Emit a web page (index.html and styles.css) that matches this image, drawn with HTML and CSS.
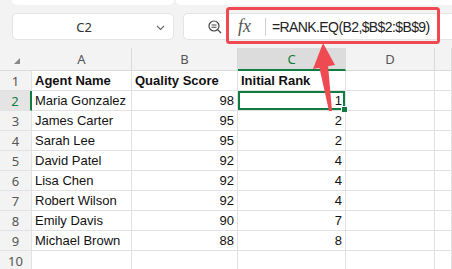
FILE: index.html
```html
<!DOCTYPE html>
<html lang="en">
<head>
<meta charset="UTF-8" />
<title>Rank formula</title>
<link rel="stylesheet" href="styles.css">
</head>
<body>

<div class="app">
  <div class="ribbon-edge">
    <div class="edge edge-left"></div>
    <div class="edge edge-right"></div>
  </div>

  <div class="formula-row">
    <div class="name-box">
      <span class="name">C2</span>
      <svg class="chevron" width="9" height="6" viewBox="0 0 9 6"><path d="M1 1l3.5 3.5L8 1" fill="none" stroke="#666" stroke-width="1.1"/></svg>
    </div>
    <div class="formula-bar">
      <svg class="zoom-icon" width="14" height="14" viewBox="0 0 14 14">
        <circle cx="6" cy="6" r="5" fill="none" stroke="#444" stroke-width="1.2"/>
        <path d="M3.5 5h5M3.5 7.2h5" stroke="#444" stroke-width="1.1"/>
        <path d="M9.6 9.6l3.4 3.4" stroke="#444" stroke-width="1.3"/>
      </svg>
      <span class="fx">fx</span>
      <span class="sep"></span>
      <span class="formula">=RANK.EQ(B2,$B$2:$B$9)</span>
    </div>
  </div>

  <div class="sheet">
    <div class="hdr corner"><span class="corner-mark"></span></div>
    <div class="hdr">A</div>
    <div class="hdr">B</div>
    <div class="hdr active">C</div>
    <div class="hdr">D</div>
    <div class="hdr"></div>

    <div class="rh">1</div>
    <div class="c b">Agent Name</div>
    <div class="c b">Quality Score</div>
    <div class="c b">Initial Rank</div>
    <div class="c"></div><div class="c"></div>

    <div class="rh active">2</div>
    <div class="c">Maria Gonzalez</div>
    <div class="c num">98</div>
    <div class="c num sel">1</div>
    <div class="c"></div><div class="c"></div>

    <div class="rh">3</div>
    <div class="c">James Carter</div>
    <div class="c num">95</div>
    <div class="c num">2</div>
    <div class="c"></div><div class="c"></div>

    <div class="rh">4</div>
    <div class="c">Sarah Lee</div>
    <div class="c num">95</div>
    <div class="c num">2</div>
    <div class="c"></div><div class="c"></div>

    <div class="rh">5</div>
    <div class="c">David Patel</div>
    <div class="c num">92</div>
    <div class="c num">4</div>
    <div class="c"></div><div class="c"></div>

    <div class="rh">6</div>
    <div class="c">Lisa Chen</div>
    <div class="c num">92</div>
    <div class="c num">4</div>
    <div class="c"></div><div class="c"></div>

    <div class="rh">7</div>
    <div class="c">Robert Wilson</div>
    <div class="c num">92</div>
    <div class="c num">4</div>
    <div class="c"></div><div class="c"></div>

    <div class="rh">8</div>
    <div class="c">Emily Davis</div>
    <div class="c num">90</div>
    <div class="c num">7</div>
    <div class="c"></div><div class="c"></div>

    <div class="rh">9</div>
    <div class="c">Michael Brown</div>
    <div class="c num">88</div>
    <div class="c num">8</div>
    <div class="c"></div><div class="c"></div>

    <div class="rh">10</div>
    <div class="c"></div>
    <div class="c"></div>
    <div class="c"></div>
    <div class="c"></div><div class="c"></div>
  </div>

  <!-- callout drawn over the screenshot -->
  <svg class="callout" width="452" height="269" viewBox="0 0 452 269">
    <rect x="227.5" y="8.5" width="211" height="34" rx="2" fill="none" stroke="#ef4a52" stroke-width="3"/>
    <polygon points="323,43 313,69 335,65" fill="#ef4a52"/>
    <polygon points="319,66 328,65 332,111 329,111" fill="#ef4a52"/>
  </svg>
</div>

</body>
</html>
```

FILE: styles.css
```css
body {
  margin: 0;
  background: #f3f3f3;
  font-family: "Liberation Sans", Arial, sans-serif;
}
.app {
  position: relative;
  width: 452px;
  height: 269px;
  overflow: hidden;
}
.ribbon-edge {
  display: flex;
  gap: 2px;
  padding-left: 12px;
  height: 5px;
}
.edge {
  background: #fff;
  border-radius: 0 0 5px 5px;
}
.edge-left {
  width: 162px;
}
.edge-right {
  flex: 1;
  border-radius: 0 0 0 5px;
}
.formula-row {
  display: flex;
  gap: 9px;
  margin-top: 8px;
  padding-left: 12px;
  height: 27px;
}
.name-box {
  width: 162px;
  box-sizing: border-box;
  background: #fff;
  border: 1px solid #e4e4e4;
  border-radius: 5px;
  display: flex;
  align-items: center;
  position: relative;
}
.name {
  flex: 1;
  text-align: center;
  padding-right: 18px;
  font-family: "Noto Sans", sans-serif;
  font-size: 13px;
  color: #333;
}
.chevron {
  position: absolute;
  right: 8px;
  top: 11px;
}
.formula-bar {
  flex: 1;
  background: #fff;
  border: 1px solid #e4e4e4;
  border-right: none;
  border-radius: 5px 0 0 5px;
  display: flex;
  align-items: center;
  padding-left: 24px;
}
.fx {
  margin-left: 16px;
  font-family: "Liberation Serif", serif;
  font-style: italic;
  font-size: 18px;
  color: #555;
  width: 16px;
}
.sep {
  width: 1px;
  height: 18px;
  background: #d0d0d0;
  margin-left: 11px;
}
.formula {
  margin-left: 6px;
  font-size: 14px;
  letter-spacing: -0.6px;
  color: #222;
}
.sheet {
  margin-top: 8px;
  display: grid;
  grid-template-columns: 32px 100px 106px 108px 89px 1fr;
  grid-template-rows: 23px;
  grid-auto-rows: 20px;
  background: #fff;
}
.hdr, .rh {
  background: #f3f3f3;
  font-family: "Noto Sans", sans-serif;
  font-size: 13px;
  color: #555;
  display: flex;
  align-items: center;
  justify-content: center;
  box-sizing: border-box;
}
.hdr {
  border-right: 1px solid #dadada;
  border-bottom: 1px solid #dadada;
}
.hdr.corner {
  border-right: none;
  position: relative;
}
.corner-mark {
  position: absolute;
  left: 14px;
  top: 10px;
  border-left: 6px solid transparent;
  border-bottom: 6px solid #888;
}
.hdr.active {
  background: #dcdcdc;
  color: #107c41;
  border-bottom: 2px solid #107c41;
}
.rh {
  border-bottom: 1px solid #e2e2e2;
  border-right: 1px solid #e2e2e2;
}
.rh.active {
  background: #e4e4e4;
  color: #107c41;
  border-right: 2px solid #107c41;
}
.c {
  font-size: 13px;
  color: #111;
  padding: 0 3px;
  line-height: 19px;
  white-space: nowrap;
  border-right: 1px solid #e2e2e2;
  border-bottom: 1px solid #e2e2e2;
  box-sizing: border-box;
}
.c.b {
  font-weight: bold;
}
.c.num {
  text-align: right;
}
.c.sel {
  position: relative;
  box-shadow: inset 0 0 0 2px #107c41;
}
.c.sel::after {
  content: "";
  position: absolute;
  right: -3px;
  bottom: -3px;
  width: 5px;
  height: 5px;
  background: #107c41;
  border: 1px solid #fff;
  z-index: 1;
}
.callout {
  position: absolute;
  left: 0;
  top: 0;
  pointer-events: none;
}
```
